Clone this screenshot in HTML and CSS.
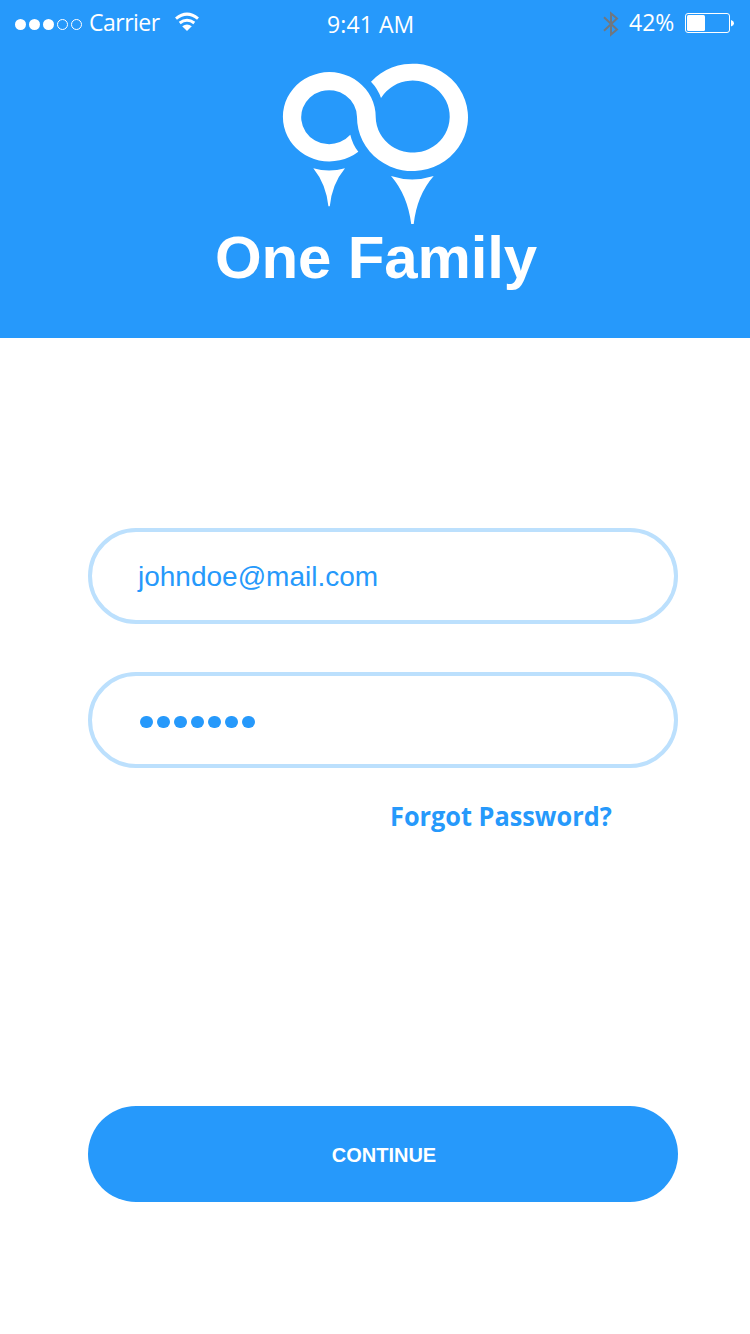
FILE: index.html
```html
<!DOCTYPE html>
<html lang="en">
<head>
<meta charset="utf-8">
<title>One Family</title>
<link rel="stylesheet" href="styles.css">
</head>
<body>
<div class="screen">
  <header class="hero">
    <div class="status">
      <div class="status-left">
        <svg class="signal" width="68" height="12" viewBox="0 0 68 12">
          <g fill="#fff"><circle cx="5.5" cy="6.5" r="5.5"/><circle cx="19.5" cy="6.5" r="5.5"/><circle cx="33.5" cy="6.5" r="5.5"/></g>
          <g fill="none" stroke="#fff"><circle cx="47.5" cy="6.5" r="5"/><circle cx="61.5" cy="6.5" r="5"/></g>
        </svg>
        <span class="carrier">Carrier</span>
        <svg class="wifi" width="24" height="19" viewBox="0 0 24 19">
          <g fill="none" stroke="#fff" stroke-width="3">
            <path d="M1 6.600Q12 -2.400 23 6.600"/>
            <path d="M4.700 11Q12 5.400 19.300 11"/>
          </g>
          <path d="M7.200 14.300Q12 10.900 16.800 14.300L12 18.900Z" fill="#fff"/>
        </svg>
      </div>
      <span class="clock">9:41 AM</span>
      <div class="status-right">
        <svg class="bluetooth" width="16" height="26" viewBox="0 0 16 26" fill="none" stroke="#6f7780" stroke-width="2">
          <path d="M1 6.200L14 18.400L8 23.600V2.400L14 7.600L1 19.800"/>
        </svg>
        <span class="percent">42%</span>
        <svg class="battery" width="50" height="21" viewBox="0 0 50 21">
          <rect x=".5" y=".5" width="44" height="19" rx="2.500" fill="none" stroke="#fff"/>
          <rect x="2" y="2" width="18" height="16" rx="1.500" fill="#fff"/>
          <path d="M46 7Q49 8 49 10.300Q49 12.500 46 13.500Z" fill="#fff"/>
        </svg>
      </div>
    </div>
    <svg class="logo" width="186" height="162" viewBox="282 63 186 162" fill="#fff">
      <path d="M358.300 151.700A46.400 44.700 0 1 1 375.700 117A37 36 0 1 0 381 98Q378 89 371 81.700A55.500 53.700 0 1 1 357 117A27.900 27 0 1 0 350.300 134.700Q352.500 144.500 358.300 151.700Z"/>
      <path d="M313.300 168.300Q329 172.800 345 168.300Q332 184 329.800 206.300H328.400Q326 184 313.300 168.300Z"/>
      <path d="M391 176Q412 182.800 433.700 176Q417 195 413.700 224H411.200Q407.500 195 391 176Z"/>
    </svg>
    <h1 class="brand">One Family</h1>
  </header>
  <main class="form">
    <div class="field email">johndoe@mail.com</div>
    <div class="field password">
      <i class="dot"></i><i class="dot"></i><i class="dot"></i><i class="dot"></i><i class="dot"></i><i class="dot"></i><i class="dot"></i>
    </div>
    <a class="forgot">Forgot Password?</a>
    <button class="continue">CONTINUE</button>
  </main>
</div>
</body>
</html>
```
FILE: styles.css
```css
* { box-sizing: border-box; }
body { margin: 0; background: #fff; }
.screen { width: 750px; height: 1334px; overflow: hidden; font-family: "Liberation Sans", sans-serif; }
.hero { height: 338px; background: #2699fb; display: flex; flex-direction: column; align-items: center; color: #fff; }
.status { width: 100%; height: 63px; display: grid; grid-template-columns: 327px 1fr auto; font: 400 23px/30px "Open Sans", sans-serif; white-space: nowrap; }
.status-left { display: flex; align-items: flex-start; padding-left: 15px; }
.signal { margin-top: 18px; flex: none; }
.carrier { width: 70px; margin: 7px 0 0 6px; letter-spacing: -.5px; }
.wifi { margin: 12px 0 0 16px; }
.clock { margin-top: 9px; letter-spacing: .1px; }
.status-right { display: flex; align-items: flex-start; padding-right: 15px; }
.bluetooth { margin: 11px 10px 0 0; }
.percent { width: 46px; margin-top: 7px; }
.battery { margin: 13px 0 0 10px; }
.logo { flex: none; }
.brand { margin: -2px 0 0 2px; font-size: 60px; line-height: 69px; font-weight: 700; letter-spacing: -.15px; white-space: nowrap; }
.form { width: 590px; margin-left: 88px; padding-top: 190px; display: flex; flex-direction: column; }
.field { height: 96px; border: 4px solid #bce0fd; border-radius: 48px; padding: 0 45px; display: flex; align-items: center; color: #2699fb; font-size: 28px; }
.email { padding: 2px 46px 0; }
.password { margin-top: 48px; padding: 4px 48px 0; gap: 4.500px; }
.dot { width: 12.500px; height: 12.500px; border-radius: 50%; background: #2699fb; }
.forgot { align-self: flex-start; margin: 28px 0 0 302px; color: #2699fb; font: 700 27px/40px "Open Sans", sans-serif; white-space: nowrap; transform: scaleX(.937); transform-origin: left; }
.continue { height: 96px; margin-top: 270px; border: 0; border-radius: 48px; background: #2699fb; color: #fff; font: 700 20px/24px "Liberation Sans", sans-serif; padding: 2px 0 0 2px; }
```
